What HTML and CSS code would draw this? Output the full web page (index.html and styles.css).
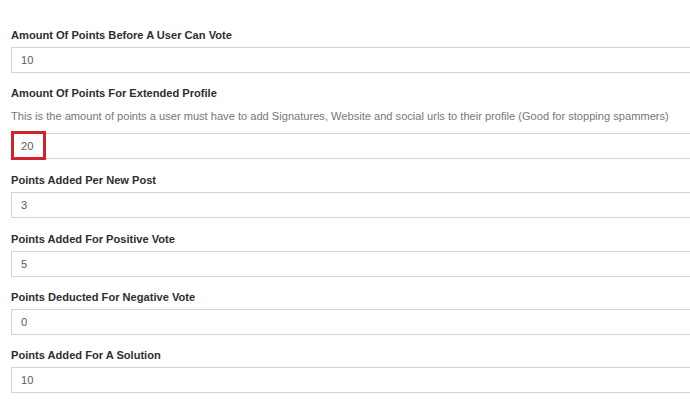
FILE: index.html
```html
<!DOCTYPE html>
<html lang="en">
<head>
<meta charset="utf-8">
<title>Points settings</title>
<link rel="stylesheet" href="styles.css">
</head>
<body>
<form class="settings">
  <div class="form-group">
    <label class="control-label">Amount Of Points Before A User Can Vote</label>
    <input class="form-control" type="text" value="10">
  </div>
  <div class="form-group form-group-help">
    <label class="control-label">Amount Of Points For Extended Profile</label>
    <p class="help-block">This is the amount of points a user must have to add Signatures, Website and social urls to their profile (Good for stopping spammers)</p>
    <div class="field-wrap">
      <input class="form-control" type="text" value="20">
      <span class="highlight"></span>
    </div>
  </div>
  <div class="form-group">
    <label class="control-label">Points Added Per New Post</label>
    <input class="form-control" type="text" value="3">
  </div>
  <div class="form-group">
    <label class="control-label">Points Added For Positive Vote</label>
    <input class="form-control" type="text" value="5">
  </div>
  <div class="form-group">
    <label class="control-label">Points Deducted For Negative Vote</label>
    <input class="form-control" type="text" value="0">
  </div>
  <div class="form-group">
    <label class="control-label">Points Added For A Solution</label>
    <input class="form-control" type="text" value="10">
  </div>
</form>
</body>
</html>
```

FILE: styles.css
```css
html, body {
  margin: 0;
  padding: 0;
  background: #ffffff;
  overflow: hidden;
}

body {
  font-family: "Liberation Sans", Arial, sans-serif;
  font-size: 11.1px;
  color: #333333;
}

.settings {
  display: flex;
  flex-direction: column;
  padding: 27px 0 0 11px;
  margin-right: -30px;
}

.form-group {
  display: flex;
  flex-direction: column;
  margin-bottom: 12.3px;
}

.form-group-help {
  margin-bottom: 13px;
}

.control-label {
  display: block;
  font-weight: bold;
  font-size: 11.1px;
  line-height: 16px;
  color: #2e2e2e;
  margin-bottom: 4px;
}

.help-block {
  margin: 3px 0 9px;
  font-size: 11.1px;
  line-height: 16px;
  color: #777777;
}

.field-wrap {
  position: relative;
}

.form-control {
  display: block;
  box-sizing: border-box;
  width: 100%;
  height: 26px;
  margin: 0;
  padding: 0 9px;
  border: 1px solid #d2d2d2;
  border-radius: 0;
  background: #ffffff;
  font-family: "Liberation Sans", Arial, sans-serif;
  font-size: 11.1px;
  color: #5a5a5a;
  outline: none;
}

.highlight {
  position: absolute;
  left: 0;
  top: -2px;
  width: 35px;
  height: 29px;
  box-sizing: border-box;
  border: 3px solid #d3222b;
  pointer-events: none;
}
```
